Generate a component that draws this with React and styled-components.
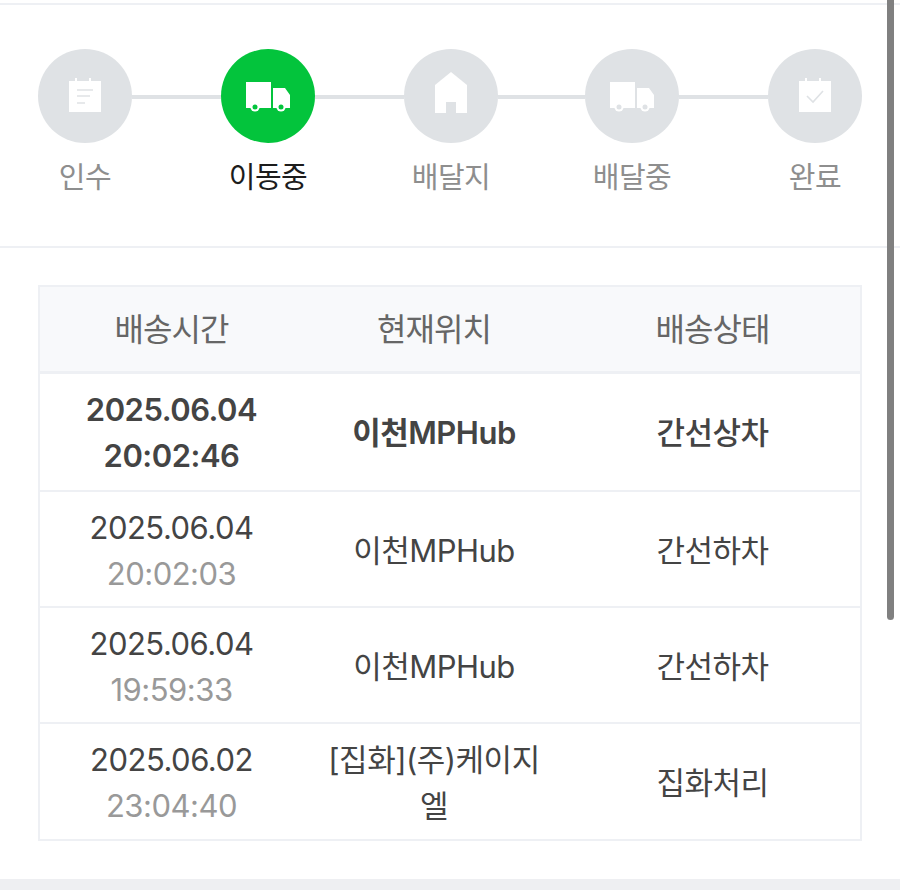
import React from 'react';
import styled, { createGlobalStyle } from 'styled-components';

const GlobalStyle = createGlobalStyle`
  html, body {
    margin: 0;
    padding: 0;
    background: #fff;
  }
  body {
    font-family: Inter, "Noto Sans CJK KR", sans-serif;
    overflow: hidden;
  }
`;

const NoteIcon = ({ detail }) => (
  <svg width="48" height="48" viewBox="0 0 48 48">
    <path fill="currentColor" d="M8 9h6V6h2v3h12V6h2v3h10v31H8z" />
    <path stroke={detail} strokeWidth="1.4" fill="none" d="M16 18h16M16 24h13M16 31h8" />
  </svg>
);

const CheckIcon = ({ detail }) => (
  <svg width="48" height="48" viewBox="0 0 48 48">
    <path fill="currentColor" d="M8 9h6V6h2v3h12V6h2v3h10v31H8z" />
    <path stroke={detail} strokeWidth="1.6" fill="none" d="M16 24l6 6 10-11" />
  </svg>
);

const TruckIcon = ({ detail }) => (
  <svg width="48" height="48" viewBox="0 0 48 48">
    <path fill="currentColor" d="M2 10h25v26H2zM29 16h12l5 7v13H29z" />
    <circle cx="11" cy="35" r="4.6" fill="currentColor" />
    <circle cx="37" cy="35" r="4.6" fill="currentColor" />
    <circle cx="11" cy="35" r="2.5" fill={detail} />
    <circle cx="37" cy="35" r="2.5" fill={detail} />
  </svg>
);

const HomeIcon = ({ detail }) => (
  <svg width="48" height="48" viewBox="0 0 48 48">
    <path fill="currentColor" d="M24 0l16 13v28H8V13z" />
    <path fill={detail} d="M19 30h10v11H19z" />
  </svg>
);

const GREEN = '#03c43c';
const GREY = '#dfe2e5';

const steps = [
  { label: '인수', Icon: NoteIcon },
  { label: '이동중', Icon: TruckIcon, active: true, gap: 89 },
  { label: '배달지', Icon: HomeIcon, gap: 89 },
  { label: '배달중', Icon: TruckIcon, gap: 87 },
  { label: '완료', Icon: CheckIcon, gap: 89 },
];

const rows = [
  { date: '2025.06.04', time: '20:02:46', place: '이천MPHub', status: '간선상차', latest: true, height: 119 },
  { date: '2025.06.04', time: '20:02:03', place: '이천MPHub', status: '간선하차', height: 116 },
  { date: '2025.06.04', time: '19:59:33', place: '이천MPHub', status: '간선하차', height: 116 },
  { date: '2025.06.02', time: '23:04:40', place: '[집화](주)케이지엘', status: '집화처리', height: 117 },
];

const App = () => {
  return (
    <>
      <GlobalStyle />
      <Page>
        <Stepper>
          {steps.map((step, index) => (
            <React.Fragment key={index}>
              {index > 0 && <Connector $width={step.gap} />}
              <Step>
                <Circle $active={step.active}>
                  <step.Icon detail={step.active ? GREEN : GREY} />
                </Circle>
                <StepLabel $active={step.active}>{step.label}</StepLabel>
              </Step>
            </React.Fragment>
          ))}
        </Stepper>

        <TableSection>
          <Table>
            <colgroup>
              <col style={{ width: 264 }} />
              <col style={{ width: 262 }} />
              <col />
            </colgroup>
            <thead>
              <tr>
                <HeadCell>배송시간</HeadCell>
                <HeadCell>현재위치</HeadCell>
                <HeadCell>배송상태</HeadCell>
              </tr>
            </thead>
            <tbody>
              {rows.map((row, index) => (
                <Row key={index} $latest={row.latest} $height={row.height}>
                  <Cell>
                    <div>{row.date}</div>
                    <Time $latest={row.latest}>{row.time}</Time>
                  </Cell>
                  <Cell><Place>{row.place}</Place></Cell>
                  <Cell><Status $latest={row.latest}>{row.status}</Status></Cell>
                </Row>
              ))}
            </tbody>
          </Table>
        </TableSection>

        <BottomBand />
        <ScrollThumb />
      </Page>
    </>
  );
};

export default App;

const Page = styled.div`
  position: relative;
  width: 900px;
  height: 890px;
  display: flex;
  flex-direction: column;
  background: #fff;
  overflow: hidden;
  padding-top: 3px;
  box-sizing: border-box;
`;

const Stepper = styled.div`
  display: flex;
  align-items: flex-start;
  height: 245px;
  padding: 44px 38px 0;
  box-sizing: border-box;
  border-top: 2px solid #eef0f4;
  border-bottom: 2px solid #eef0f4;
  flex-shrink: 0;
`;

const Step = styled.div`
  width: 94px;
  flex-shrink: 0;
  display: flex;
  flex-direction: column;
  align-items: center;
`;

const Circle = styled.div`
  width: 94px;
  height: 94px;
  border-radius: 50%;
  display: flex;
  align-items: center;
  justify-content: center;
  color: #fff;
  background: ${p => (p.$active ? GREEN : GREY)};
`;

const StepLabel = styled.div`
  margin-top: 13px;
  font-size: 29px;
  line-height: 44px;
  letter-spacing: -0.5px;
  white-space: nowrap;
  color: ${p => (p.$active ? '#1c1c1c' : '#8e8e8e')};
`;

const Connector = styled.div`
  width: ${p => p.$width}px;
  flex-shrink: 0;
  height: 4px;
  margin-top: 46px;
  background: ${GREY};
`;

const TableSection = styled.div`
  padding: 37px 38px 0;
`;

const Table = styled.table`
  width: 824px;
  table-layout: fixed;
  border-collapse: collapse;
  border: 2px solid #eef0f4;
`;

const HeadCell = styled.th`
  height: 86px;
  padding: 0 0 4px;
  box-sizing: border-box;
  font-size: 32px;
  font-weight: 400;
  letter-spacing: -1px;
  color: #666;
  background: #f8f9fb;
  border-bottom: 3px solid #eef0f4;
`;

const Row = styled.tr`
  height: ${p => p.$height}px;
  font-weight: ${p => (p.$latest ? 600 : 400)};
  color: #444;
  border-bottom: 2px solid #eef0f4;
`;

const Cell = styled.td`
  padding: 3px 0 0;
  text-align: center;
  font-size: 31px;
  line-height: 46px;
  letter-spacing: -0.5px;
`;

const Time = styled.div`
  color: ${p => (p.$latest ? '#444' : '#999')};
`;

const Place = styled.div`
  width: 220px;
  margin: 0 auto;
  word-break: break-all;
`;

const Status = styled.div`
  font-weight: ${p => (p.$latest ? 500 : 400)};
`;

const BottomBand = styled.div`
  margin-top: auto;
  height: 11px;
  flex-shrink: 0;
  background: #eeeff2;
`;

const ScrollThumb = styled.div`
  position: absolute;
  top: 0;
  right: 6px;
  width: 7px;
  height: 620px;
  border-radius: 0 0 4px 4px;
  background: #808080;
`;
